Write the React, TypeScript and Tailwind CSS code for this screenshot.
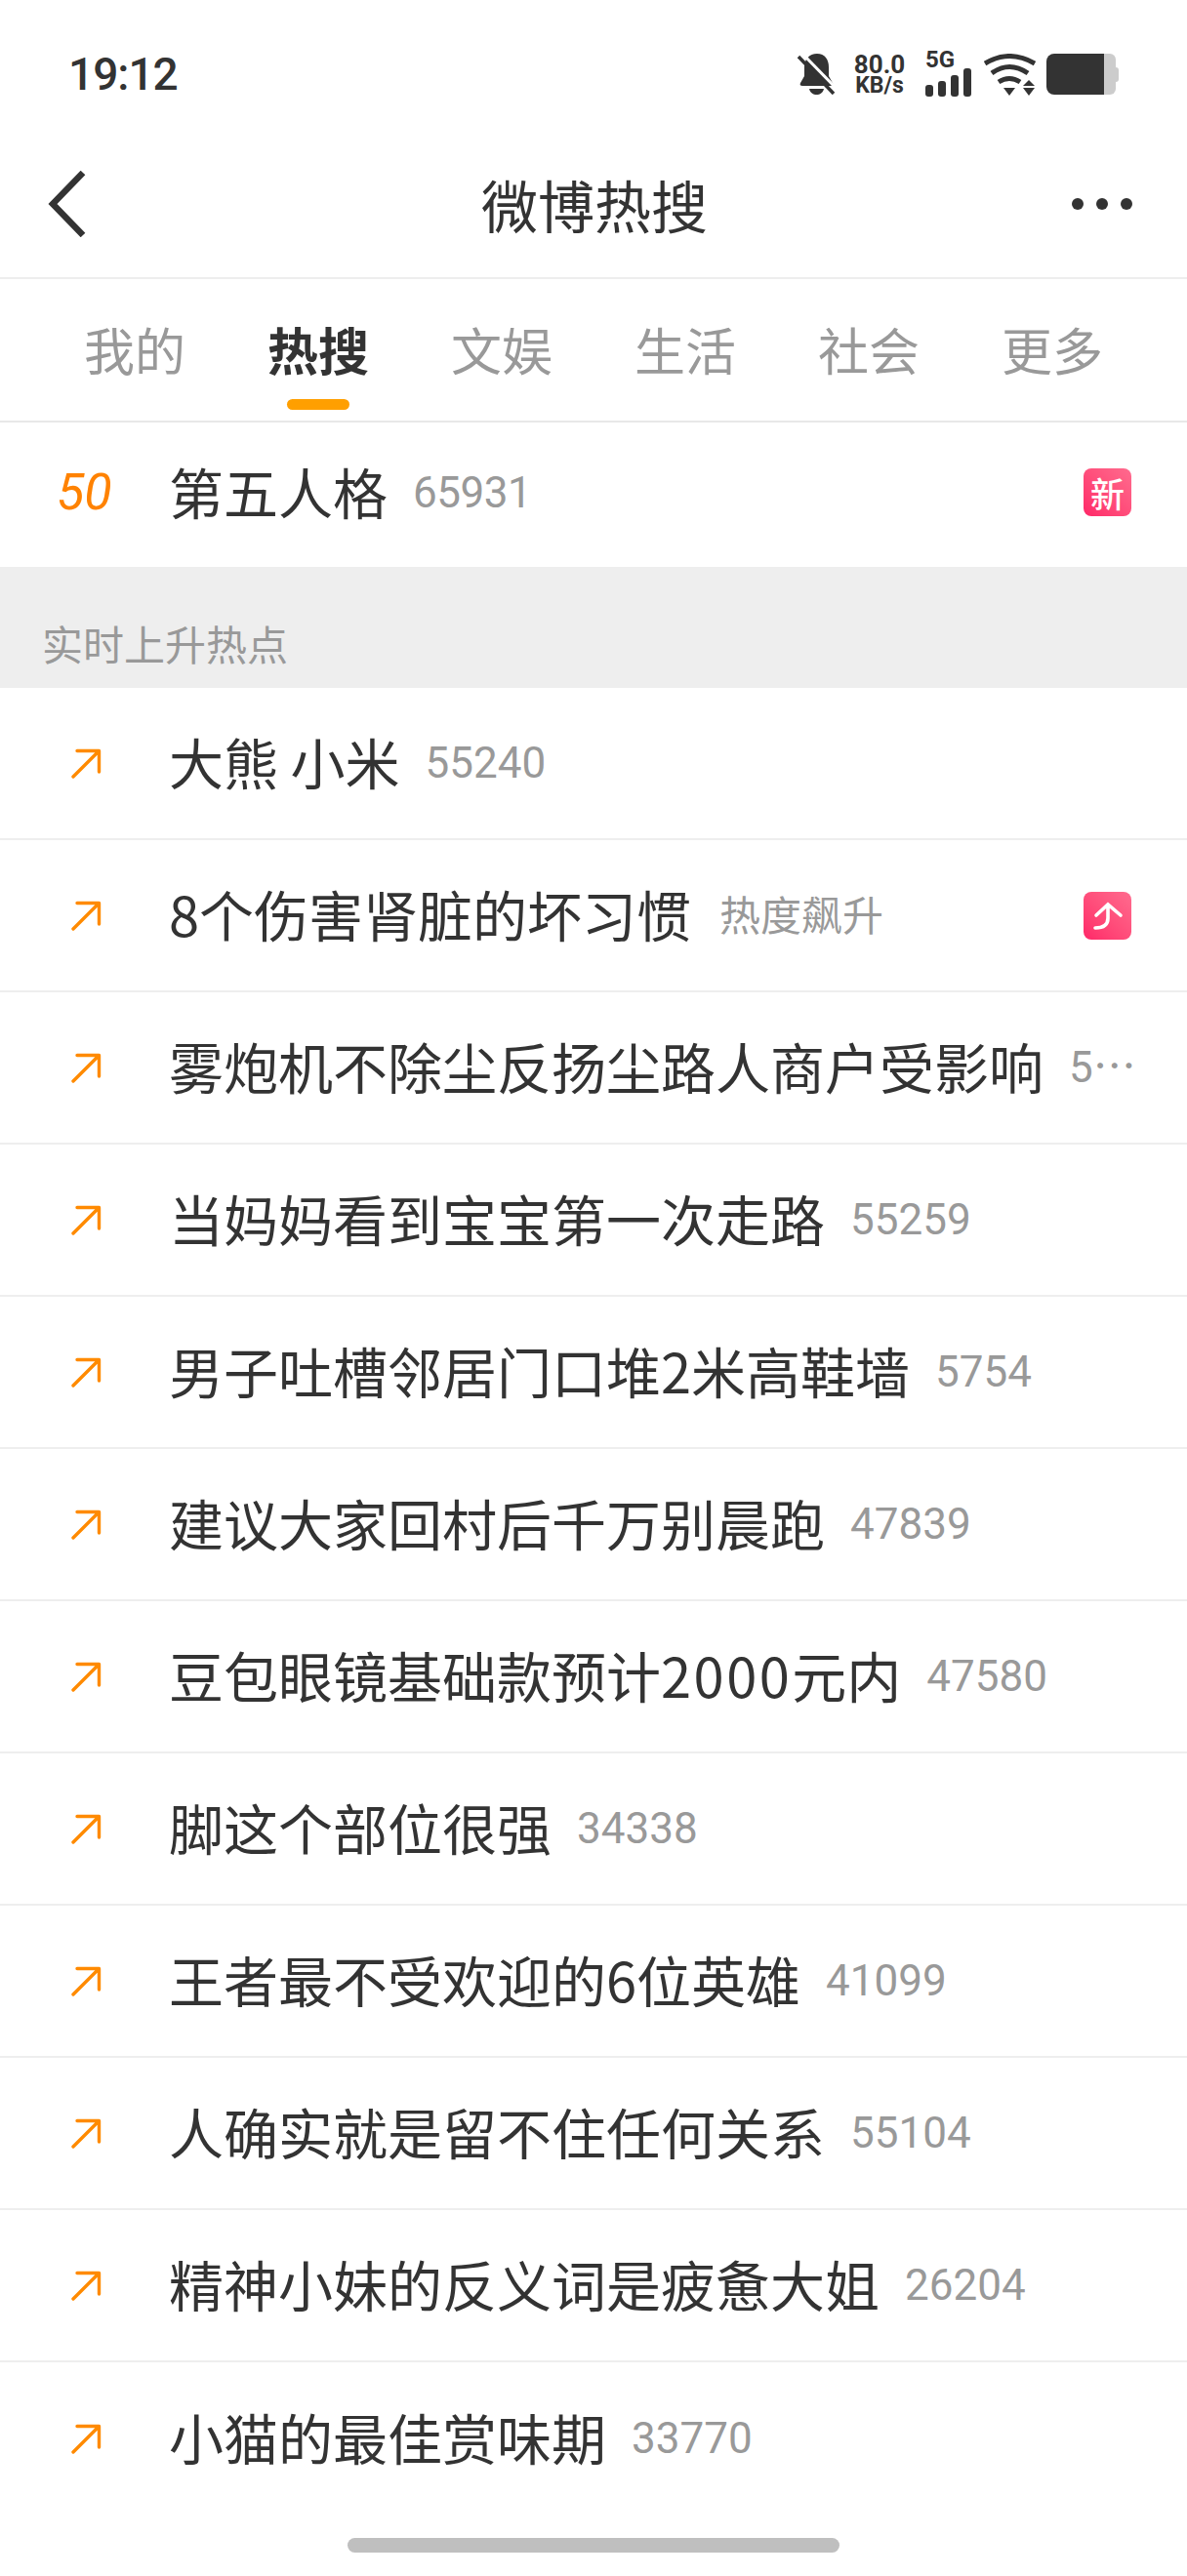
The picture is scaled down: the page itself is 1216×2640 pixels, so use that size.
const cjk = "font-['Noto_Sans_CJK_SC','Noto_Sans',sans-serif]";
const num = "font-['Roboto','Noto_Sans_CJK_SC',sans-serif]";

function Arrow() {
  return (
    <svg viewBox="0 0 31 31" className="w-[31px] h-[31px] text-[#ff8a00]" fill="none" stroke="currentColor" strokeWidth="3.4" strokeLinecap="round" strokeLinejoin="round">
      <path d="M6 2.500H28.500V24M28 3L2 29" />
    </svg>
  );
}

function NewBadge() {
  return (
    <div className="w-[49px] h-[49px] rounded-lg bg-gradient-to-tr from-[#ff2468] to-[#ff6a8e] flex items-center justify-center text-white text-[35px] leading-none font-medium shrink-0">
      新
    </div>
  );
}

function UpBadge() {
  return (
    <div className="w-[49px] h-[49px] rounded-lg bg-gradient-to-tr from-[#ff2468] to-[#ff6a8e] shrink-0">
      <svg viewBox="0 0 49 49" className="w-[49px] h-[49px]" fill="none" stroke="white" strokeWidth="3.6" strokeLinecap="round">
        <path d="M13 24L25 13L38 24M25 14V27Q25 37 12 37" />
      </svg>
    </div>
  );
}

function Title({ text }: { text: string }) {
  return (
    <div className="text-[56px] leading-none text-[#333333] whitespace-nowrap shrink-0 pb-[4px]">
      {text.split(/(\d{4})/).map((part, i) =>
        /^\d{4}$/.test(part) ? (
          <span key={i} className="tracking-[2.5px]">{part}</span>
        ) : (
          part
        )
      )}
    </div>
  );
}

function Row({ title, count, label, badge }: { title: string; count?: string; label?: string; badge?: "up" }) {
  return (
    <div className="h-[156px] flex items-center border-b-2 border-[#eeeeee] last:border-b-0">
      <div className="w-[173px] pl-[73px] shrink-0 flex">
        <Arrow />
      </div>
      <Title text={title} />
      {count && <div className={`ml-[26px] text-[44px] leading-none text-[#999999] whitespace-nowrap ${num}`}>{count}</div>}
      {label && <div className="ml-[29px] text-[42px] leading-none text-[#999999] whitespace-nowrap pb-[4px]">{label}</div>}
      {badge === "up" && (
        <div className="ml-auto pr-[57px]">
          <UpBadge />
        </div>
      )}
    </div>
  );
}

const rows: { title: string; count?: string; label?: string; badge?: "up" }[] = [
  { title: "大熊 小米", count: "55240" },
  { title: "8个伤害肾脏的坏习惯", label: "热度飙升", badge: "up" },
  { title: "雾炮机不除尘反扬尘路人商户受影响", count: "5⋯" },
  { title: "当妈妈看到宝宝第一次走路", count: "55259" },
  { title: "男子吐槽邻居门口堆2米高鞋墙", count: "5754" },
  { title: "建议大家回村后千万别晨跑", count: "47839" },
  { title: "豆包眼镜基础款预计2000元内", count: "47580" },
  { title: "脚这个部位很强", count: "34338" },
  { title: "王者最不受欢迎的6位英雄", count: "41099" },
  { title: "人确实就是留不住任何关系", count: "55104" },
  { title: "精神小妹的反义词是疲惫大姐", count: "26204" },
  { title: "小猫的最佳赏味期", count: "33770" },
];

const tabs = ["我的", "热搜", "文娱", "生活", "社会", "更多"];

function Bell() {
  return (
    <svg viewBox="0 0 40 42" className="w-[40px] h-[42px]">
      <path fill="#333" d="M20 0C28 0 32 6 32 14V23L36 30C37 32 36 33 34 33H5C3 33 2 32 3 30L7 23V14C7 6 12 0 20 0Z" />
      <path fill="#333" d="M12 36H27C26 40 23 42 19.500 42C16 42 13 40 12 36Z" />
      <path stroke="#fff" strokeWidth="3" d="M5 0L41 37" />
      <path stroke="#333" strokeWidth="3.500" d="M1 3L37 41" />
    </svg>
  );
}

function Signal() {
  return (
    <div className="flex items-end gap-[5px] h-[29px]">
      <div className="w-[8px] h-[12px] rounded-[3px] bg-[#333333]" />
      <div className="w-[8px] h-[16px] rounded-[3px] bg-[#333333]" />
      <div className="w-[8px] h-[22px] rounded-[3px] bg-[#333333]" />
      <div className="w-[8px] h-[29px] rounded-[3px] bg-[#333333]" />
    </div>
  );
}

function Wifi() {
  return (
    <svg viewBox="0 0 53 43" className="w-[53px] h-[43px]" fill="none">
      <path stroke="#333" strokeWidth="5" d="M1 10Q26 -5 52 10" />
      <path stroke="#333" strokeWidth="5" d="M8 20Q26 7 45 20" />
      <path stroke="#333" strokeWidth="5" d="M15 29Q26 22 37 29" />
      <path fill="#333" d="M20 35H32L26 43Z" />
      <path fill="#333" d="M40 33H52L46 27Z" />
      <path fill="#333" d="M40 35H52L46 43Z" />
    </svg>
  );
}

function Battery() {
  return (
    <div className="flex items-center">
      <div className="w-[59px] h-[42px] bg-[#333333] rounded-l-lg" />
      <div className="w-[12px] h-[42px] bg-[#cccccc] rounded-r-md" />
      <div className="w-[3px] h-[15px] bg-[#cccccc] rounded-r-sm" />
    </div>
  );
}

export default function App() {
  return (
    <div className={`w-[1216px] h-[2640px] bg-white overflow-hidden flex flex-col ${cjk}`}>
      <div className="h-[140px] shrink-0 flex items-center justify-between pt-[12px] pl-[70px] pr-[70px]">
        <div className={`text-[46px] leading-none font-medium text-[#333333] tracking-[-1px] ${num}`}>19:12</div>
        <div className="flex items-center">
          <Bell />
          <div className={`ml-[17px] w-[54px] flex flex-col items-center font-bold text-[#333333] ${num}`}>
            <span className="text-[26px] leading-[23px]">80.0</span>
            <span className="text-[23px] leading-[19px]">KB/s</span>
          </div>
          <div className="ml-[20px] flex flex-col items-start">
            <span className={`text-[24px] leading-[17px] font-bold text-[#333333] ${num}`}>5G</span>
            <Signal />
          </div>
          <div className="ml-[13px]"><Wifi /></div>
          <div className="ml-[11px]"><Battery /></div>
        </div>
      </div>

      <div className="h-[146px] shrink-0 flex items-center justify-between border-b-2 border-[#eeeeee] pl-[48px] pr-[56px] pb-[7px]">
        <svg viewBox="0 0 40 68" className="w-[40px] h-[68px]" fill="none" stroke="#333" strokeWidth="6.500">
          <path d="M37 2L6 34L37 66" />
        </svg>
        <div className="text-[58px] leading-none text-[#333333] ml-[32px]">微博热搜</div>
        <div className="flex items-center gap-[13px]">
          <div className="w-[12px] h-[12px] rounded-full bg-[#333333]" />
          <div className="w-[12px] h-[12px] rounded-full bg-[#333333]" />
          <div className="w-[12px] h-[12px] rounded-full bg-[#333333]" />
        </div>
      </div>

      <div className="h-[147px] shrink-0 grid grid-cols-6 px-[44px] border-b-2 border-[#e8e8e8]">
        {tabs.map((t, i) => (
          <div key={t} className="relative flex items-center justify-center pb-[2px]">
            <span className={i === 1 ? "text-[52px] leading-none font-bold text-[#333333]" : "text-[52px] leading-none text-[#999999]"}>{t}</span>
            {i === 1 && <div className="absolute left-1/2 -translate-x-1/2 bottom-[11px] w-[64px] h-[11px] rounded-full bg-[#ff9f00]" />}
          </div>
        ))}
      </div>

      <div className="h-[148px] shrink-0 flex items-center pb-[5px]">
        <div className={`w-[173px] pl-[58px] shrink-0 text-[52px] leading-none italic text-[#ff8200] ${num}`}>50</div>
        <div className="text-[56px] leading-none text-[#333333] pb-[3px]">第五人格</div>
        <div className={`ml-[26px] text-[44px] leading-none text-[#999999] tracking-[-0.5px] ${num}`}>65931</div>
        <div className="ml-auto pr-[57px]"><NewBadge /></div>
      </div>

      <div className="h-[124px] shrink-0 bg-[#eeeeee] flex items-end pl-[43px] pb-[25px]">
        <span className="text-[42px] leading-none text-[#999999]">实时上升热点</span>
      </div>

      <div className="flex flex-col">
        {rows.map((r) => (
          <Row key={r.title} {...r} />
        ))}
      </div>

      <div className="flex-1 flex justify-center pt-[24px]">
        <div className="w-[504px] h-[15px] rounded-full bg-[#bfbfbf]" />
      </div>
    </div>
  );
}
